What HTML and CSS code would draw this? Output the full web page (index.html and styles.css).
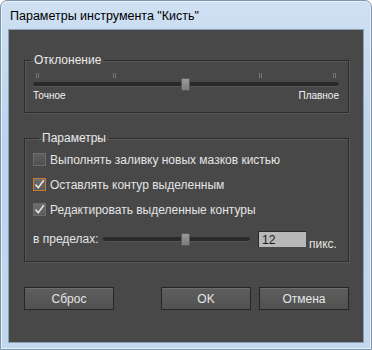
FILE: index.html
```html
<!DOCTYPE html>
<html lang="ru">
<head>
    <meta charset="UTF-8">
    <meta name="viewport" content="width=device-width, initial-scale=1.0">
    <title>Параметры инструмента "Кисть"</title>
    <link rel="stylesheet" href="styles.css">
</head>
<body>
    <div class="window">
        <div class="titlebar">Параметры инструмента "Кисть"</div>
        <div class="client">
            <fieldset class="group group-dev">
                <legend>Отклонение</legend>
                <div class="scale">
                    <div class="ticks">
                        <span class="tick" style="left: 1%"></span>
                        <span class="tick" style="left: 26%"></span>
                        <span class="tick" style="left: 74%"></span>
                        <span class="tick" style="left: 98%"></span>
                    </div>
                    <div class="track"><span class="thumb" style="left: 48.5%"></span></div>
                    <div class="scale-labels">
                        <span>Точное</span>
                        <span>Плавное</span>
                    </div>
                </div>
            </fieldset>

            <fieldset class="group group-opts">
                <legend>Параметры</legend>
                <label class="check"><span class="box"></span>Выполнять заливку новых мазков кистью</label>
                <label class="check"><span class="box checked focus"><svg viewBox="0 0 11 11"><path d="M1.5 5.5 L4.2 8.8 L9.8 1.2" /></svg></span>Оставлять контур выделенным</label>
                <label class="check"><span class="box checked"><svg viewBox="0 0 11 11"><path d="M1.5 5.5 L4.2 8.8 L9.8 1.2" /></svg></span>Редактировать выделенные контуры</label>
                <div class="range-row">
                    <span class="range-label">в пределах:</span>
                    <div class="track track-small"><span class="thumb" style="left: 53%"></span></div>
                    <span class="num">12</span>
                    <span class="unit">пикс.</span>
                </div>
            </fieldset>

            <div class="buttons">
                <button class="btn">Сброс</button>
                <button class="btn btn-ok">OK</button>
                <button class="btn">Отмена</button>
            </div>
        </div>
    </div>
</body>
</html>
```

FILE: styles.css
```css
body {
    margin: 0;
    background-color: #ffffff;
    font-family: "Liberation Sans", Arial, sans-serif;
    font-size: 12px;
}
.window {
    width: 372px;
    height: 350px;
    box-sizing: border-box;
    border: 1px solid #7f95ad;
    border-radius: 7px 7px 0 0;
    background: linear-gradient(#cfe0f2, #bcd3ec 40%, #c2d8ee);
    box-shadow: inset 0 0 0 1px #e6f0fa;
}
.titlebar {
    height: 28px;
    line-height: 30px;
    padding-left: 9px;
    color: #000;
    font-size: 12.5px;
}
.client {
    height: 314px;
    box-sizing: border-box;
    margin: 0 7px 6px 7px;
    border: 1px solid #8d9fb3;
    background-color: #484848;
    padding: 23px 14px 0 15px;
    color: #e4e4e4;
}
.group {
    margin: 0;
    padding: 0;
    border: 1px solid #2c2c2c;
    box-shadow: inset 1px 1px 0 #585858, 1px 1px 0 #585858;
    min-width: 0;
}
.group legend {
    margin-left: 6px;
    padding: 0 3px;
    line-height: 14px;
    color: #e8e8e8;
}
.scale {
    margin: 6px 9px 10px 8px;
}
.ticks {
    position: relative;
    height: 5px;
}
.tick {
    position: absolute;
    top: 0;
    width: 1px;
    height: 5px;
    border-left: 1px solid #777;
    border-right: 1px solid #777;
}
.track {
    position: relative;
    height: 4px;
    margin-top: 4px;
    background-color: #2a2a2a;
    border-radius: 2px;
    box-shadow: 0 1px 0 #555;
}
.thumb {
    position: absolute;
    top: -4px;
    width: 7px;
    height: 11px;
    background: linear-gradient(#9a9a9a, #7c7c7c);
    border: 1px solid #5a5a5a;
    border-radius: 1px;
}
.scale-labels {
    display: flex;
    justify-content: space-between;
    margin-top: 4px;
    font-size: 10px;
    line-height: 12px;
    color: #f2f2f2;
}
.group-opts {
    margin-top: 18px;
    padding: 2px 8px 12px 8px;
}
.check {
    display: flex;
    align-items: center;
    height: 25px;
    gap: 4px;
}
.box {
    width: 11px;
    height: 11px;
    flex: none;
    border: 1px solid #6c6c6c;
    background: linear-gradient(#606060, #505050);
    display: flex;
    align-items: center;
    justify-content: center;
}
.box.checked {
    background: linear-gradient(#6e6e6e, #5a5a5a);
}
.box.focus {
    border-color: #c77a30;
}
.box svg {
    width: 11px;
    height: 11px;
}
.box path {
    fill: none;
    stroke: #e4e4e4;
    stroke-width: 1.6;
}
.range-row {
    display: flex;
    align-items: center;
    height: 20px;
    margin-top: 7px;
}
.range-label {
    width: 70px;
    flex: none;
}
.track-small {
    width: 147px;
    margin-top: 0;
    margin-right: 8px;
    flex: none;
}
.num {
    width: 48px;
    height: 16px;
    box-sizing: border-box;
    padding: 1px 3px;
    background-color: #b8b8b8;
    border-top: 1px solid #2a2a2a;
    border-left: 1px solid #2a2a2a;
    color: #1a1a1a;
    line-height: 14px;
    margin-right: 3px;
}
.unit {
    margin-top: 10px;
}
.buttons {
    display: flex;
    margin-top: 25px;
}
.btn {
    width: 90px;
    height: 23px;
    padding: 0;
    font-family: "Liberation Sans", Arial, sans-serif;
    font-size: 12px;
    color: #e6e6e6;
    background: linear-gradient(#5e5e5e, #515151);
    border: 1px solid #262626;
    box-shadow: inset 0 1px 0 #6c6c6c;
}
.btn-ok {
    margin-left: auto;
    margin-right: 8px;
}
```
